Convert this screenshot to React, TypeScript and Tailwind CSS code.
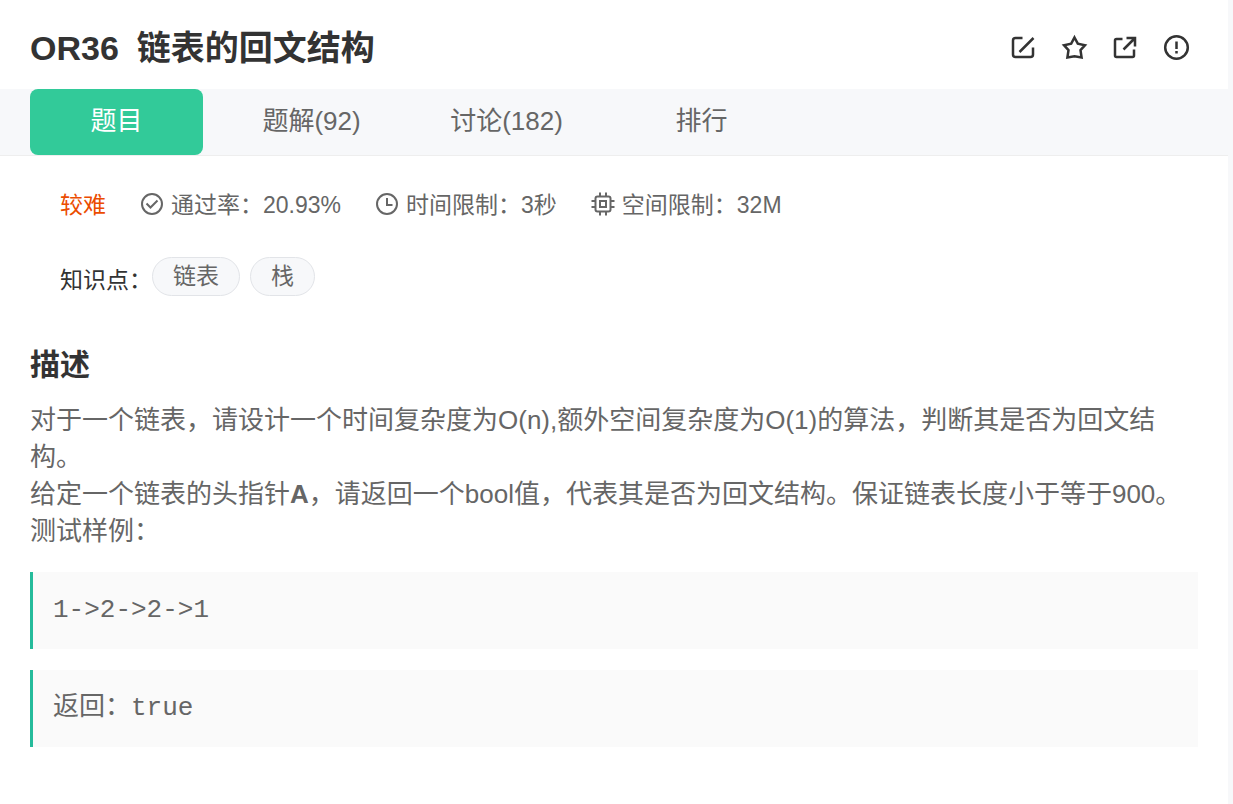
import type { ReactNode } from "react";

const tabs = [
  { label: "题目", active: true },
  { label: "题解(92)", active: false },
  { label: "讨论(182)", active: false },
  { label: "排行", active: false },
];

const tags = ["链表", "栈"];

const samples = ["1->2->2->1", "返回：true"];

const actions = [
  {
    label: "编辑",
    icon: (
      <>
        <path d="M12.500 4H5.500A2.500 2.500 0 0 0 3 6.500V20.500A2.500 2.500 0 0 0 5.500 23H20.500A2.500 2.500 0 0 0 23 20.500V13.500" />
        <path d="M9.500 18L23.500 4" />
      </>
    ),
  },
  {
    label: "收藏",
    icon: <path d="M13.500 3.500L16.800 9.600L24 11.200L19.500 16.200L20.600 23.500L13.500 22.300L6.400 23.500L7.500 16.200L3 11.200L10.200 9.600Z" />,
  },
  {
    label: "分享",
    icon: (
      <>
        <path d="M10.500 5H4.500A1.500 1.500 0 0 0 3 6.500V21.500A1.500 1.500 0 0 0 4.500 23H20.500A1.500 1.500 0 0 0 22 21.500V15.500" />
        <path d="M14.500 4H23V12.500M23 4L11.500 15.500" />
      </>
    ),
  },
  {
    label: "反馈",
    icon: (
      <>
        <circle cx="13.500" cy="13.500" r="11.300" />
        <path d="M13.500 7.500V15M13.500 17V19.500" />
      </>
    ),
  },
];

function MetaItem({ icon, children }: { icon: ReactNode; children: ReactNode }) {
  return (
    <div className="flex items-center gap-[7px]">
      <svg className="-mt-0.5 size-6 shrink-0" viewBox="0 0 24 24" fill="none" stroke="currentColor" strokeWidth="2" aria-hidden="true">
        {icon}
      </svg>
      <span>{children}</span>
    </div>
  );
}

export default function App() {
  return (
    <div className="min-h-screen border-r-[5px] border-[#f7f8fa] bg-white font-['Liberation_Sans','Noto_Sans_CJK_SC',sans-serif] text-[#666]" lang="zh-CN">
      <header className="flex items-center justify-between pt-6 pr-[38px] pb-4 pl-[30px] text-[#333]">
        <h1 className="flex gap-[18px] text-[34px] leading-[49px] font-bold">
          <span>OR36</span>
          <span>链表的回文结构</span>
        </h1>
        <div className="flex gap-6 pb-0.5">
          {actions.map((action) => (
            <button key={action.label} type="button" aria-label={action.label}>
              <svg className="size-[27px]" viewBox="0 0 27 27" fill="none" stroke="currentColor" strokeWidth="2.500">
                {action.icon}
              </svg>
            </button>
          ))}
        </div>
      </header>

      <nav className="flex gap-[22px] border-b border-[#eee] bg-[#f7f8fa] px-[30px]">
        {tabs.map((tab) => (
          <button
            key={tab.label}
            type="button"
            className={`h-[66px] w-[173px] rounded-lg pb-px text-[26px] ${tab.active ? "bg-[#32ca99] text-white" : ""}`}
          >
            {tab.label}
          </button>
        ))}
      </nav>

      <main className="px-[30px]">
        <div className="px-[30px]">
          <div className="flex flex-wrap items-center gap-[34px] pt-8 text-[23px] leading-[34px]">
            <span className="text-[#eb4c00]">较难</span>
            <MetaItem
              icon={
                <>
                  <circle cx="12" cy="12" r="10" />
                  <path d="M6.500 11.500L10.500 15.500L17.500 8.500" />
                </>
              }
            >
              通过率：20.93%
            </MetaItem>
            <MetaItem
              icon={
                <>
                  <circle cx="12" cy="12" r="10" />
                  <path d="M12 6V13H17.500" />
                </>
              }
            >
              时间限制：3秒
            </MetaItem>
            <MetaItem
              icon={
                <>
                  <rect x="4.500" y="4.500" width="15" height="15" rx="2" />
                  <rect x="9" y="9" width="6" height="6" />
                  <path d="M9 .500V4M15 .500V4M9 20V23.500M15 20V23.500M.500 9H4M.500 15H4M20 9H23.500M20 15H23.500" />
                </>
              }
            >
              空间限制：32M
            </MetaItem>
          </div>

          <div className="flex items-start pt-[35px] text-[23px]">
            <span className="pt-1 leading-[38px] text-[#333]">知识点：</span>
            <div className="flex gap-[10px]">
              {tags.map((tag) => (
                <a key={tag} href="#" className="rounded-full border border-[#e2e4e8] bg-[#f7f8fa] px-5 leading-[37px]">
                  {tag}
                </a>
              ))}
            </div>
          </div>
        </div>

        <h2 className="pt-11 text-[30px] leading-[44px] font-bold text-[#333]">描述</h2>
        <div className="pt-[15px] text-[26px] leading-[37px]">
          <p>对于一个链表，请设计一个时间复杂度为O(n),额外空间复杂度为O(1)的算法，判断其是否为回文结构。</p>
          <p>
            给定一个链表的头指针<b>A</b>，请返回一个bool值，代表其是否为回文结构。保证链表长度小于等于900。
          </p>
          <p>测试样例：</p>
        </div>

        <div className="flex flex-col gap-[21px] pt-[22px] pb-14">
          {samples.map((sample) => (
            <pre
              key={sample}
              className="border-l-[3px] border-[#25bb9b] bg-[#fafafa] py-5 pl-5 font-['Liberation_Mono','Noto_Sans_CJK_SC',monospace] text-[26px] leading-[37px]"
            >
              {sample}
            </pre>
          ))}
        </div>
      </main>
    </div>
  );
}
